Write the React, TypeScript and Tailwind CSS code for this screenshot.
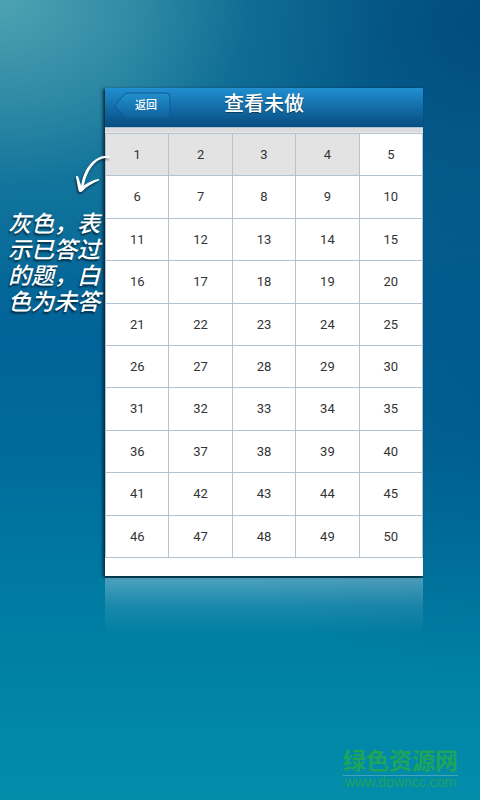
const QUESTION_COUNT = 50;
const answered = [1, 2, 3, 4];

const questions = Array.from({ length: QUESTION_COUNT }, (_, i) => i + 1);

const BackButton = () => (
  <button type="button" className="relative h-7 w-[58px] text-white">
    <svg viewBox="0 0 58 28" className="absolute inset-0 h-full w-full" aria-hidden="true">
      <defs>
        <linearGradient id="back-fill" x1="0" y1="0" x2="0" y2="1">
          <stop offset="0" stopColor="#2190d0" />
          <stop offset="1" stopColor="#0f629b" />
        </linearGradient>
      </defs>
      <path
        d="M1.5 14 L11 2.8 Q12.5 1 15 1 H53 Q57 1 57 5 V22 Q57 26 53 26 H15 Q12.5 26 11 24.5 Z"
        fill="url(#back-fill)"
        stroke="#0c5b93"
        strokeWidth="1"
      />
    </svg>
    <span className="relative block pl-2 text-[11px] leading-6 font-medium">返回</span>
  </button>
);

const Arrow = () => (
  <svg
    viewBox="0 0 40 42"
    className="absolute top-[65px] left-[73px] z-10 h-[42px] w-10 [filter:drop-shadow(-1px_2px_1px_rgba(0,0,0,0.55))]"
    fill="#fff"
    aria-hidden="true"
  >
    <path d="M38 5 C35 2.6 30 2.6 26 4.4 C17 8.5 11 18 8.8 29 L7.6 36 L10 36.5 C12 25 16 15 23 9 C28 5.2 33 4.2 38 5 Z" />
    <path d="M3 24.2 C2.6 22.8 4.6 22.4 5.2 23.8 L8.6 34 C13 30.4 19 27.4 25 26 C26.4 25.8 26.4 27.2 25.4 27.8 C19.4 30.4 13.6 33.8 9 38.4 C7.6 39.6 5.8 39 5.4 37 Z" />
  </svg>
);

const App = () => {
  return (
    <div className="flex min-h-screen flex-col bg-[radial-gradient(ellipse_80%_36%_at_0%_0%,rgba(94,176,184,0.8)_0%,rgba(80,162,176,0.55)_35%,rgba(50,140,165,0.22)_65%,transparent_100%),radial-gradient(ellipse_75%_45%_at_100%_3%,rgba(0,70,122,0.85)_0%,rgba(0,74,124,0.5)_45%,transparent_100%),radial-gradient(ellipse_60%_35%_at_100%_50%,rgba(0,84,132,0.6)_0%,transparent_100%),linear-gradient(180deg,#0a6f97_0%,#086d99_25%,#026399_42%,#006b9b_56%,#0079a1_72%,#0083a5_86%,#038dab_100%)] font-['Roboto','Noto_Sans_CJK_SC',sans-serif]">
      <main className="grid grid-cols-[105px_1fr_57px] pt-[88px]">
        <aside className="relative pt-[121px] pl-2">
          <Arrow />
          <p className="font-['Noto_Sans_CJK_SC',sans-serif] text-[23px] leading-[26px] font-medium whitespace-nowrap text-white italic [text-shadow:-1px_2px_2px_rgba(0,0,0,0.6)]">
            灰色，表<br />
            示已答过<br />
            的题，白<br />
            色为未答
          </p>
        </aside>

        <div>
          <section className="bg-white pb-[18px] shadow-[-2px_1px_3px_rgba(0,20,35,0.8),0_2px_0_#03506b]">
            <header className="grid h-[39px] grid-cols-[1fr_auto_1fr] items-start bg-linear-to-b from-[#218fd1] to-[#074d80]">
              <div className="pt-1 pl-2">
                <BackButton />
              </div>
              <h1 className="text-xl leading-8 font-medium text-white [text-shadow:0_1px_1px_rgba(0,0,0,0.4)]">
                查看未做
              </h1>
            </header>
            <div className="h-[6px] border-y border-t-[#a9c2d8] border-b-[#e9e9e9] bg-[#dcdcdf]" />

            <div className="grid h-[425px] grid-cols-5 grid-rows-10 border-t border-l border-[#b3c3d5]">
              {questions.map((n) => (
                <button
                  key={n}
                  type="button"
                  className={`border-r border-b border-[#b3c3d5] text-[13px] text-[#333] ${
                    answered.includes(n) ? 'bg-[#e3e3e3]' : 'bg-white'
                  }`}
                >
                  {n}
                </button>
              ))}
            </div>
          </section>
          {/* floor reflection of the card */}
          <div className="mt-[2px] h-14 bg-linear-to-b from-white/30 via-white/10 to-transparent" />
        </div>
      </main>

      <footer className="mt-auto flex justify-end pr-[22px] pb-3">
        <a href="http://www.downcc.com" className="text-center text-[#1fa45c]">
          <span className="block border-b border-[#3fa5b4] text-[23px] leading-[26px] font-bold">绿色资源网</span>
          <span className="block font-['Liberation_Sans',sans-serif] text-sm leading-3">www.downcc.com</span>
        </a>
      </footer>
    </div>
  );
};

export default App;
